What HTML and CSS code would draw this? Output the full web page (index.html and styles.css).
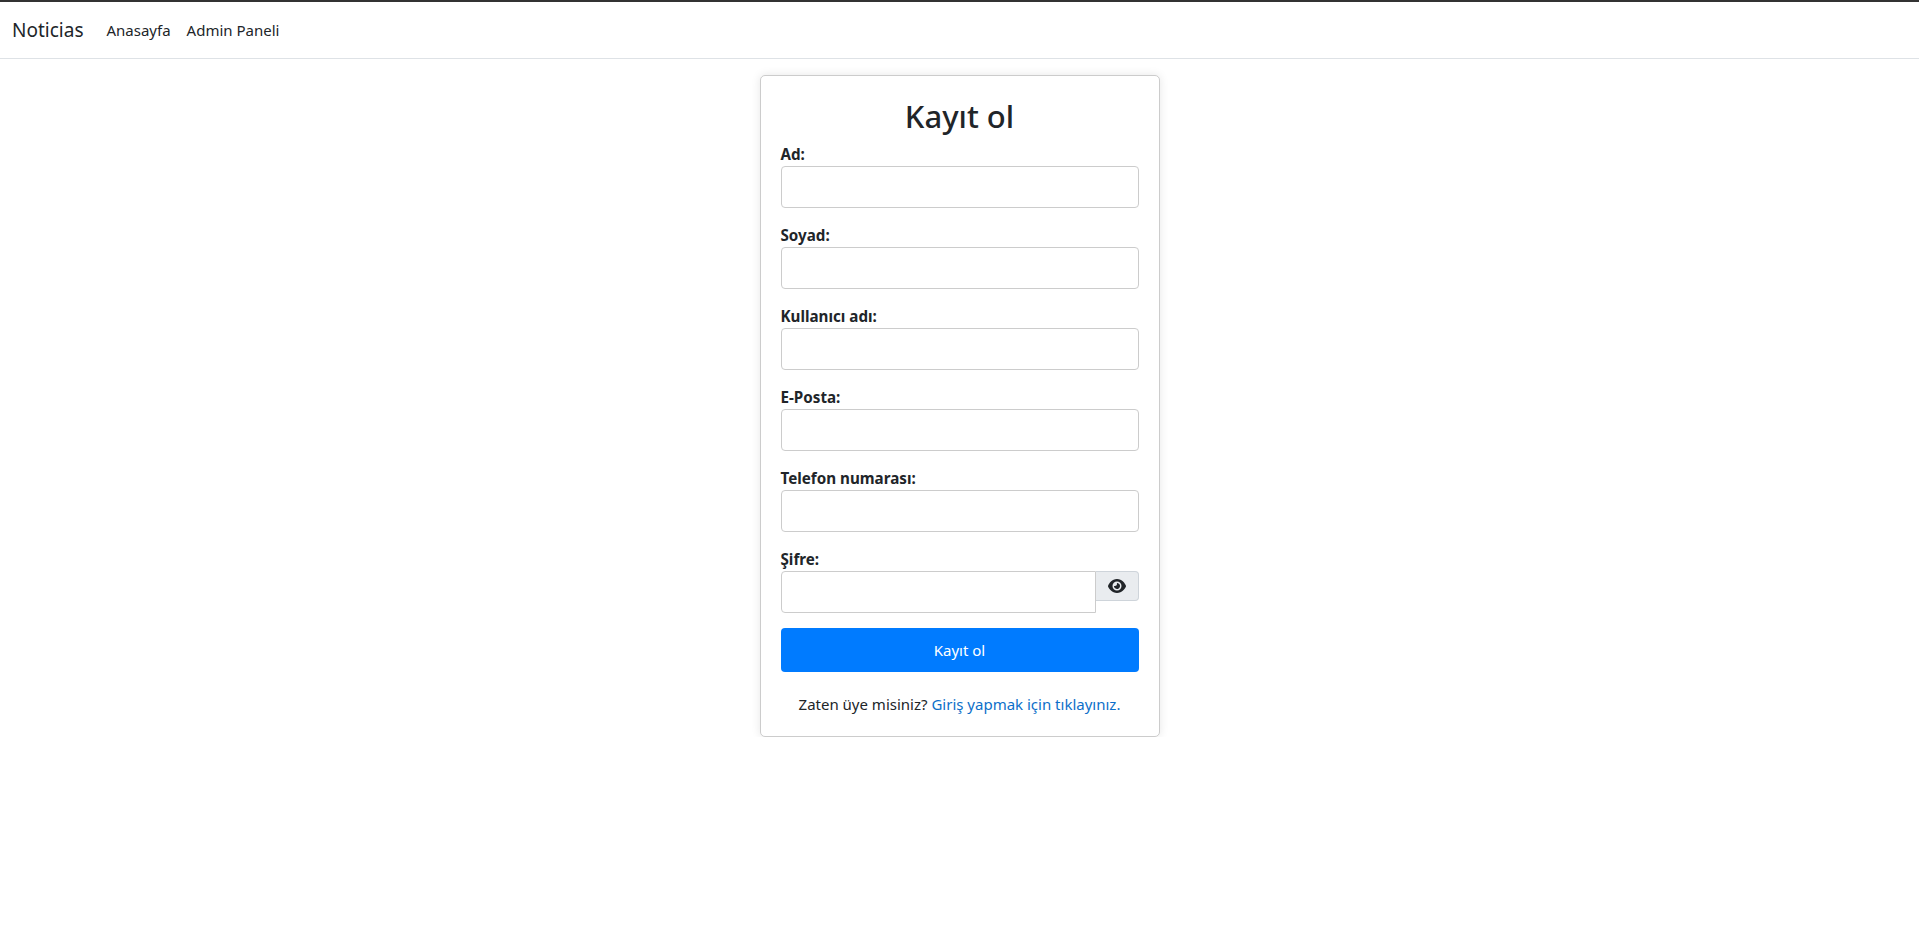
FILE: index.html
```html
<!DOCTYPE html>
<html lang="tr">
<head>
    <meta charset="UTF-8">
    <meta name="viewport" content="width=device-width, initial-scale=1.0">
    <title>Kayıt ol</title>
    <link rel="stylesheet" href="styles.css">
</head>
<body>
    <nav class="navbar">
        <a class="brand" href="#">Noticias</a>
        <a class="nav-link" href="#">Anasayfa</a>
        <a class="nav-link" href="#">Admin Paneli</a>
    </nav>

    <main class="page">
        <form class="card">
            <h2 class="card-title">Kayıt ol</h2>

            <div class="field">
                <label for="ad">Ad:</label>
                <input type="text" id="ad">
            </div>
            <div class="field">
                <label for="soyad">Soyad:</label>
                <input type="text" id="soyad">
            </div>
            <div class="field">
                <label for="kullanici">Kullanıcı adı:</label>
                <input type="text" id="kullanici">
            </div>
            <div class="field">
                <label for="eposta">E-Posta:</label>
                <input type="text" id="eposta">
            </div>
            <div class="field">
                <label for="telefon">Telefon numarası:</label>
                <input type="text" id="telefon">
            </div>
            <div class="field">
                <label for="sifre">Şifre:</label>
                <div class="password-row">
                    <input type="password" id="sifre">
                    <button type="button" class="eye-button" aria-label="Göster">
                        <svg width="18" height="16" viewBox="0 0 576 512" fill="currentColor">
                            <path d="M288 80C207 80 142 117 95 161 48 204 17 256 2 292c-3 8-3 17 0 25 15 36 46 88 93 131 47 44 112 81 193 81s146-37 193-81c47-43 78-95 93-131 3-8 3-17 0-25-15-36-46-88-93-131C434 117 369 80 288 80zM144 304a144 144 0 1 1 288 0 144 144 0 1 1-288 0zm144-64c0 35-29 64-64 64-7 0-14-1-20-3-6-2-12 2-12 8 0 7 1 14 3 21 14 51 66 82 118 68s82-66 68-118c-11-42-48-70-89-72-6 0-9 6-7 12 2 7 3 13 3 20z" transform="translate(0 -48)"/>
                        </svg>
                    </button>
                </div>
            </div>

            <button type="submit" class="submit-button">Kayıt ol</button>

            <p class="login-text">Zaten üye misiniz? <a href="#">Giriş yapmak için tıklayınız.</a></p>
        </form>
    </main>
</body>
</html>
```

FILE: styles.css
```css
* {
    box-sizing: border-box;
}

body {
    margin: 0;
    font-family: "Noto Sans", "Open Sans", sans-serif;
    font-size: 15px;
    line-height: 24px;
    color: #212529;
    background: #fff;
}

a {
    text-decoration: none;
}

.navbar {
    display: flex;
    align-items: center;
    height: 59px;
    padding: 0 12px;
    background: #fff;
    border-top: 2px solid #333;
    border-bottom: 1px solid #dee2e6;
}

.brand {
    margin-right: 23px;
    font-size: 19px;
    color: #212529;
}

.nav-link {
    margin-right: 16px;
    color: #212529;
}

.page {
    display: flex;
    justify-content: center;
    padding-top: 16px;
}

.card {
    width: 400px;
    padding: 21px 20px 20px;
    background: #fff;
    border: 1px solid #ccc;
    border-radius: 5px;
    box-shadow: 0 0 10px rgba(0, 0, 0, 0.1);
}

.card-title {
    margin: 0 0 7px;
    font-size: 31px;
    font-weight: 500;
    line-height: 38px;
    text-align: center;
}

.field {
    margin-bottom: 15px;
}

.field label {
    display: block;
    font-size: 15.2px;
    font-weight: 700;
}

.field input {
    display: block;
    width: 100%;
    height: 42px;
    padding: 6px 12px;
    font: inherit;
    border: 1px solid #ccc;
    border-radius: 4px;
}

.password-row {
    display: flex;
    align-items: flex-start;
}

.password-row input {
    flex: 1;
    min-width: 0;
    border-radius: 4px 0 0 4px;
}

.eye-button {
    display: flex;
    align-items: center;
    justify-content: center;
    width: 43px;
    height: 30px;
    padding: 0;
    color: #212529;
    background: #e9ecef;
    border: 1px solid #ced4da;
    border-left: 0;
    border-radius: 0 4px 4px 0;
}

.submit-button {
    display: block;
    width: 100%;
    height: 44px;
    font: inherit;
    color: #fff;
    background: #007bff;
    border: 0;
    border-radius: 4px;
}

.login-text {
    margin: 20px 0 0;
    text-align: center;
}

.login-text a {
    color: #0d6fc9;
}
```
